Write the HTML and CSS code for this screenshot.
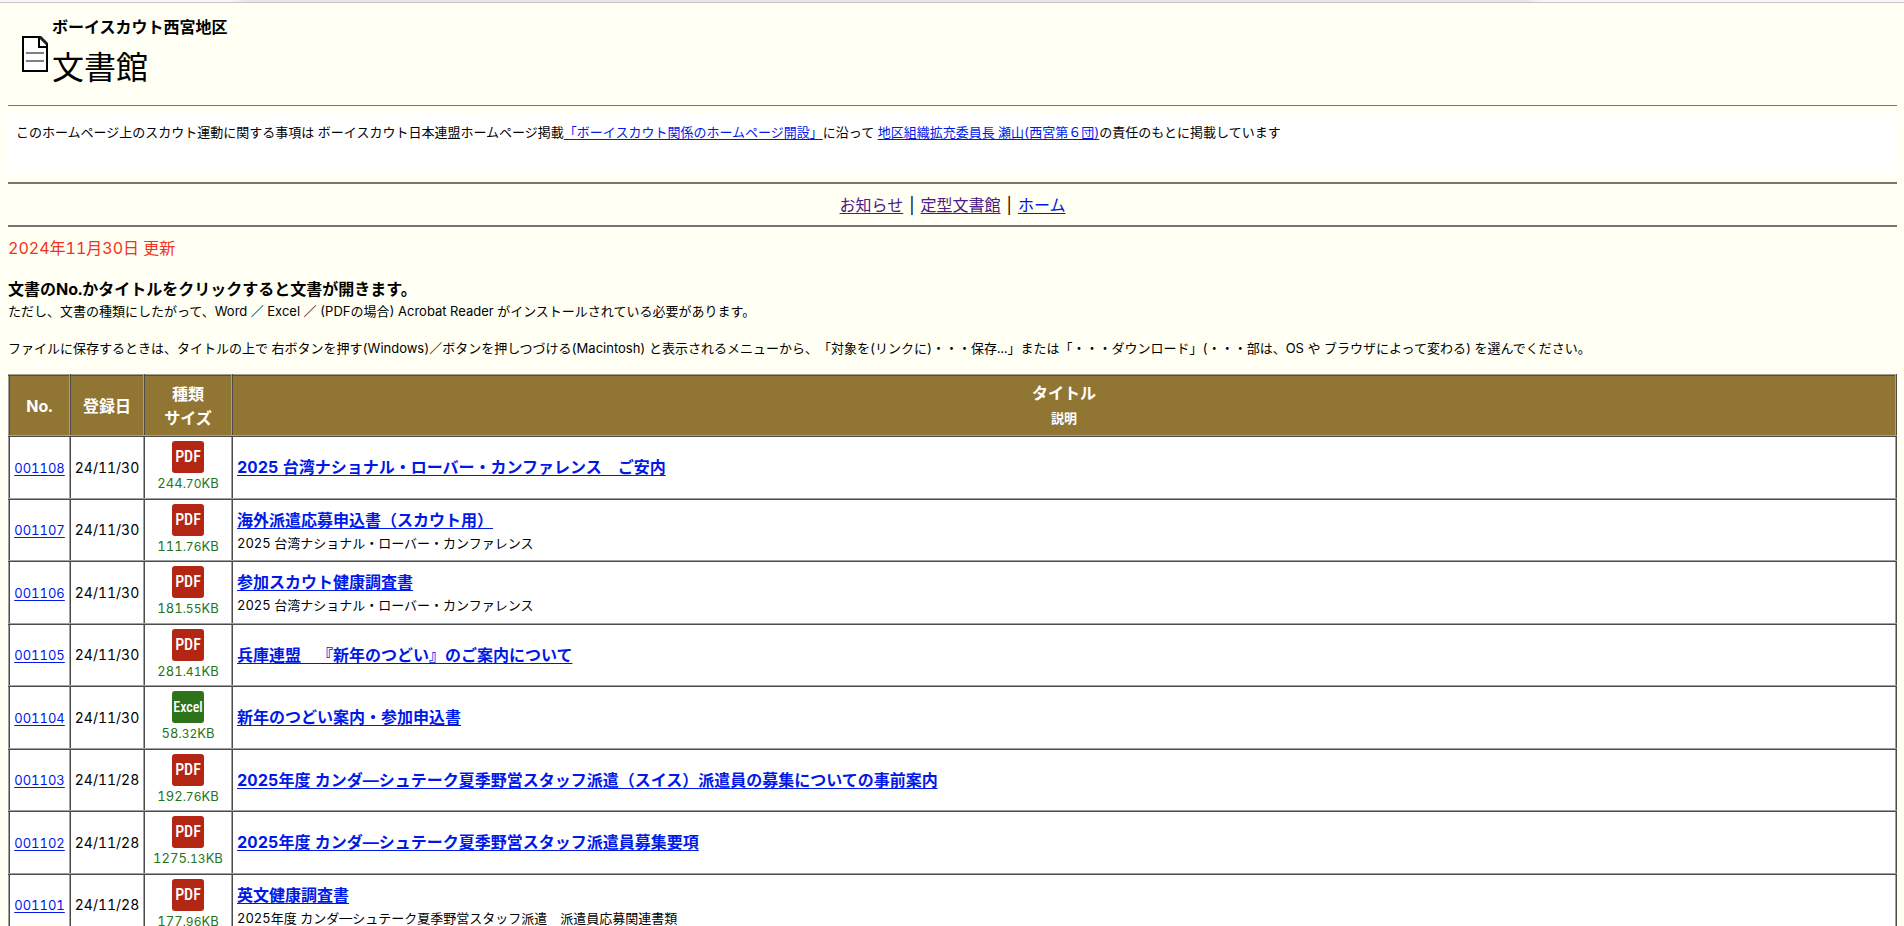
FILE: index.html
```html
<!DOCTYPE html>
<html lang="ja">
<head>
<meta charset="utf-8">
<title>文書館</title>
<link rel="stylesheet" href="styles.css">
</head>
<body>
<div class="topbar"></div>
<main class="page">
<header class="masthead">
<svg class="doc" width="26" height="36" viewBox="0 0 26 36"><path d="M1 1H18L25 8V35H1Z" fill="#fff" stroke="#000" stroke-width="2"/><path d="M17 0V11H26" fill="none" stroke="#000" stroke-width="2"/><path d="M18 1L25 8" stroke="#222" stroke-width="3"/><path d="M4 17H22M4 25H22" stroke="#808080" stroke-width="2"/></svg>
<div>
<p class="org">ボーイスカウト西宮地区</p>
<h1 class="name">文書館</h1>
</div>
</header>
<hr class="thin">
<p class="notice">このホームページ上のスカウト運動に関する事項は ボーイスカウト日本連盟ホームページ掲載<a href="#">「ボーイスカウト関係のホームページ開設」</a>に沿って <a href="#">地区組織拡充委員長 瀬山(西宮第６団)</a>の責任のもとに掲載しています</p>
<hr>
<nav class="nav"><a class="seen" href="#">お知らせ</a>|<a class="seen" href="#">定型文書館</a>|<a href="#">ホーム</a></nav>
<hr>
<p class="updated">2024年11月30日 更新</p>
<p class="lead">文書のNo.かタイトルをクリックすると文書が開きます。</p>
<p class="note">ただし、文書の種類にしたがって、Word ／ Excel ／ (PDFの場合) Acrobat Reader がインストールされている必要があります。</p>
<p class="note save">ファイルに保存するときは、タイトルの上で 右ボタンを押す(Windows)／ボタンを押しつづける(Macintosh) と表示されるメニューから、「対象を(リンクに)・・・保存...」または「・・・ダウンロード」(・・・部は、OS や ブラウザによって変わる) を選んでください。</p>
<table class="docs">
<colgroup><col class="c-no"><col class="c-date"><col class="c-type"><col></colgroup>
<thead><tr><th>No.</th><th>登録日</th><th class="th-type">種類<br>サイズ</th><th>タイトル<br><small>説明</small></th></tr></thead>
<tbody>
<tr><td><a href="#">001108</a></td><td class="date">24/11/30</td><td class="type"><span class="badge">PDF</span>244<small>.70</small>KB</td><td class="title"><a href="#">2025 台湾ナショナル・ローバー・カンファレンス　ご安内</a></td></tr>
<tr><td><a href="#">001107</a></td><td class="date">24/11/30</td><td class="type"><span class="badge">PDF</span>111<small>.76</small>KB</td><td class="title"><a href="#">海外派遣応募申込書（スカウト用）</a><p>2025 台湾ナショナル・ローバー・カンファレンス</p></td></tr>
<tr><td><a href="#">001106</a></td><td class="date">24/11/30</td><td class="type"><span class="badge">PDF</span>181<small>.55</small>KB</td><td class="title"><a href="#">参加スカウト健康調査書</a><p>2025 台湾ナショナル・ローバー・カンファレンス</p></td></tr>
<tr><td><a href="#">001105</a></td><td class="date">24/11/30</td><td class="type"><span class="badge">PDF</span>281<small>.41</small>KB</td><td class="title"><a href="#">兵庫連盟　『新年のつどい』のご案内について</a></td></tr>
<tr><td><a href="#">001104</a></td><td class="date">24/11/30</td><td class="type"><span class="badge excel">Excel</span>58<small>.32</small>KB</td><td class="title"><a href="#">新年のつどい案内・参加申込書</a></td></tr>
<tr><td><a href="#">001103</a></td><td class="date">24/11/28</td><td class="type"><span class="badge">PDF</span>192<small>.76</small>KB</td><td class="title"><a href="#">2025年度 カンダ―シュテーク夏季野営スタッフ派遣（スイス）派遣員の募集についての事前案内</a></td></tr>
<tr><td><a href="#">001102</a></td><td class="date">24/11/28</td><td class="type"><span class="badge">PDF</span>1275<small>.13</small>KB</td><td class="title"><a href="#">2025年度 カンダ―シュテーク夏季野営スタッフ派遣員募集要項</a></td></tr>
<tr><td><a href="#">001101</a></td><td class="date">24/11/28</td><td class="type"><span class="badge">PDF</span>177<small>.96</small>KB</td><td class="title"><a href="#">英文健康調査書</a><p>2025年度 カンダ―シュテーク夏季野営スタッフ派遣　派遣員応募関連書類</p></td></tr>
</tbody>
</table>
</main>
</body>
</html>
```
FILE: styles.css
```css
body {
  margin: 0;
  background: #fffff3;
  color: #000;
  font: 16px/24px Inter, "Noto Sans CJK JP", sans-serif;
  font-variant-numeric: tabular-nums;
  text-spacing-trim: space-all;
}
p, h1 { margin: 0; }
a { color: #0018e8; text-underline-offset: 2px; }
.topbar {
  height: 2px;
  background: linear-gradient(90deg, #f7f7f7 0 12%, #e6e6e6 13% 80%, #f7f7f7 81%);
  border-bottom: 1px solid #c4c4c8;
}
.page { padding: 0 7px 0 8px; }
.masthead { display: flex; align-items: center; gap: 4px; height: 102px; padding-left: 14px; box-sizing: border-box; }
.org { font-weight: 700; padding-top: 4px; }
.name { font-size: 32px; line-height: 58px; font-weight: 400; }
hr { margin: 0; border: 0; height: 2px; background: #757575; }
.thin { height: 1px; margin-bottom: 8px; }
.notice { background: #fff; padding: 8px 8px 32px; margin-bottom: 8px; font-size: 13px; line-height: 20px; }
.nav { display: flex; justify-content: center; gap: 6px; padding: 9px 0 8px; }
.seen { color: #4b1a88; }
.updated { color: #ee3322; padding-top: 9px; }
.lead { font-weight: 700; padding-top: 17px; }
.note { font-size: 13px; line-height: 20px; }
.save { padding: 17px 0 16px; }
.docs { width: 100%; table-layout: fixed; border-collapse: collapse; background: #fff; font-size: 13px; text-align: center; }
.c-no { width: 61px; }
.c-date { width: 74px; }
.c-type { width: 88px; }
.docs th, .docs td { border: 2px ridge #a0a0a0; padding: 0; white-space: nowrap; }
.docs th { height: 59px; background: #917633; color: #fff; font-size: 16px; }
.docs th small { font-size: 13px; }
.docs tbody tr { height: 63px; }
.docs tbody tr:nth-child(even) { height: 62px; }
.docs .date { font-size: 14px; }
.docs .type { color: #27731a; line-height: 20px; vertical-align: top; padding-top: 4px; }
.type small { font-size: 12px; }
.badge {
  display: block;
  width: 32px;
  height: 32px;
  margin: 0 auto;
  border-radius: 3px;
  background: #b22613;
  color: #fff;
  font: 500 16px/32px "Liberation Sans Narrow", "Roboto Condensed", Roboto, sans-serif;
}
.excel { background: #2d7319; font-size: 14px; }
.docs .title { text-align: left; padding-left: 4px; }
.title a { font-size: 16px; font-weight: 700; }
.title p { line-height: 20px; }
```
